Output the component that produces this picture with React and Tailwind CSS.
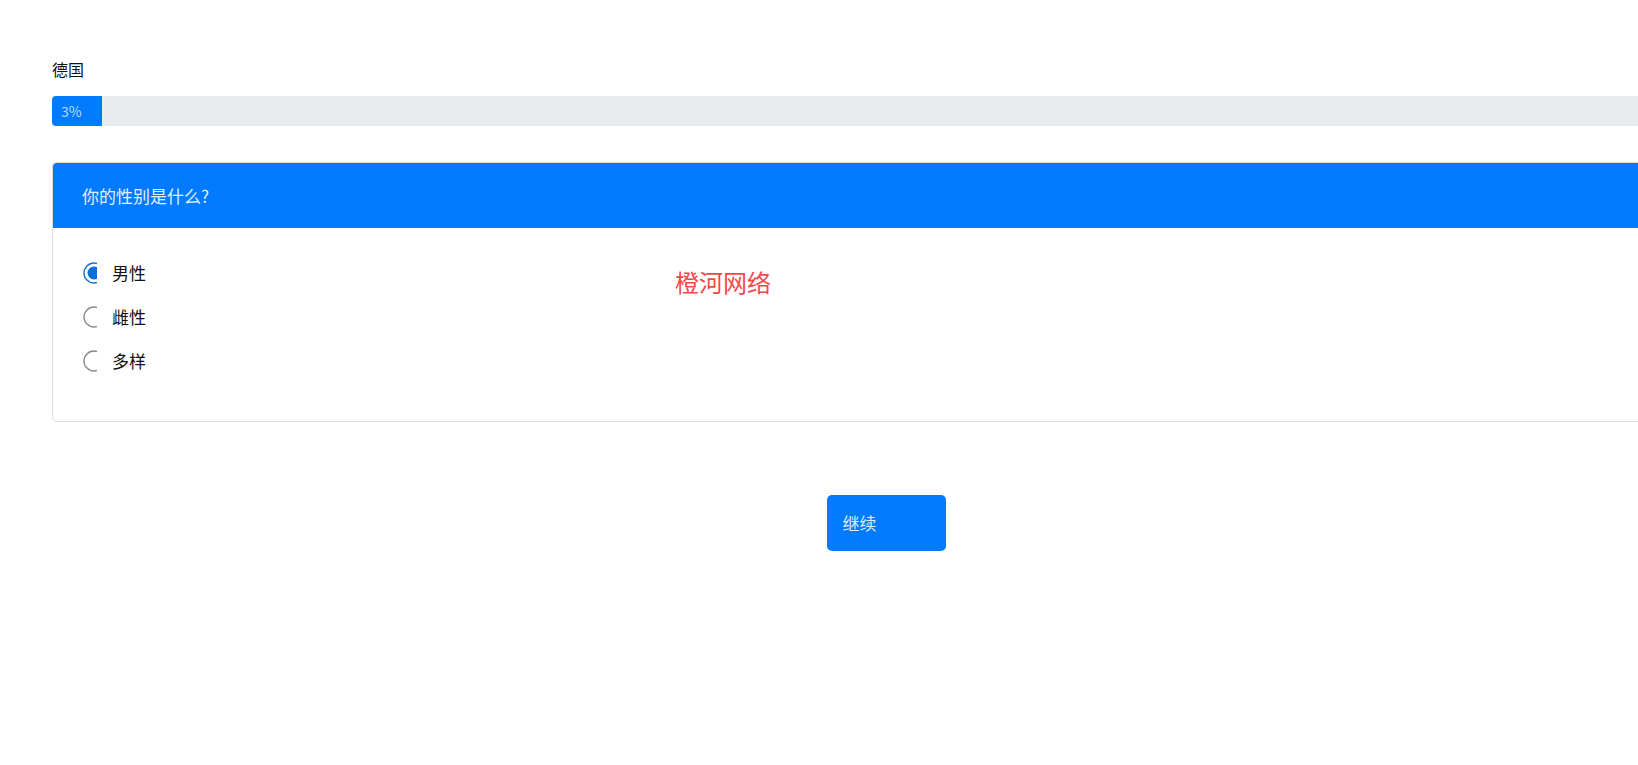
import React from "react"

const font = { fontFamily: '"Noto Sans CJK SC", "Noto Sans", sans-serif' }

function Radio({ checked }) {
  return (
    <svg width="14" height="22" viewBox="0 0 14 22" className="shrink-0 overflow-hidden">
      <circle
        cx="11"
        cy="11"
        r="10"
        fill="none"
        stroke={checked ? "#1a73c8" : "#8a8a8a"}
        strokeWidth="1.4"
      />
      {checked && <circle cx="11" cy="11" r="6.5" fill="#0a6fd6" />}
    </svg>
  )
}

const options = [
  { label: "男性", checked: true },
  { label: "雌性", checked: false },
  { label: "多样", checked: false },
]

export default function App() {
  return (
    <div className="relative w-[1638px] h-[765px] overflow-hidden bg-white text-[#212529]" style={font}>
      <div className="ml-[52px] w-[1668px] pt-[57px]">
        <div className="text-[16px] leading-[24px] text-[#111]">德国</div>

        <div className="mt-[15px] h-[30px] bg-[#e9ecef] rounded-[4px] flex overflow-hidden">
          <div className="w-[50px] bg-[#007bff] text-[14px] text-[#b9dcff] flex items-center pl-[9px]">3%</div>
        </div>

        <div className="mt-[36px] border border-[#dcdcdc] rounded-[5px] overflow-hidden">
          <div className="h-[65px] bg-[#007bff] flex items-center px-[29px] text-[17px] text-[#e3efff]">
            你的性别是什么?
          </div>
          <div className="pl-[30px] pt-[23px] pb-[38px]">
            {options.map((o) => (
              <div key={o.label} className="h-[44px] flex items-center">
                <Radio checked={o.checked} />
                <span className="ml-[15px] text-[17px] text-[#111]">{o.label}</span>
              </div>
            ))}
          </div>
        </div>

        <div className="mt-[73px] flex justify-center">
          <button className="w-[119px] h-[56px] rounded-[5px] bg-[#007bff] text-[17px] text-[#dcecff] text-left pl-[16px]">
            继续
          </button>
        </div>
      </div>

      <div className="absolute left-[675px] top-[266px] text-[24px] text-[#f44848] leading-[32px]">橙河网络</div>
    </div>
  )
}
